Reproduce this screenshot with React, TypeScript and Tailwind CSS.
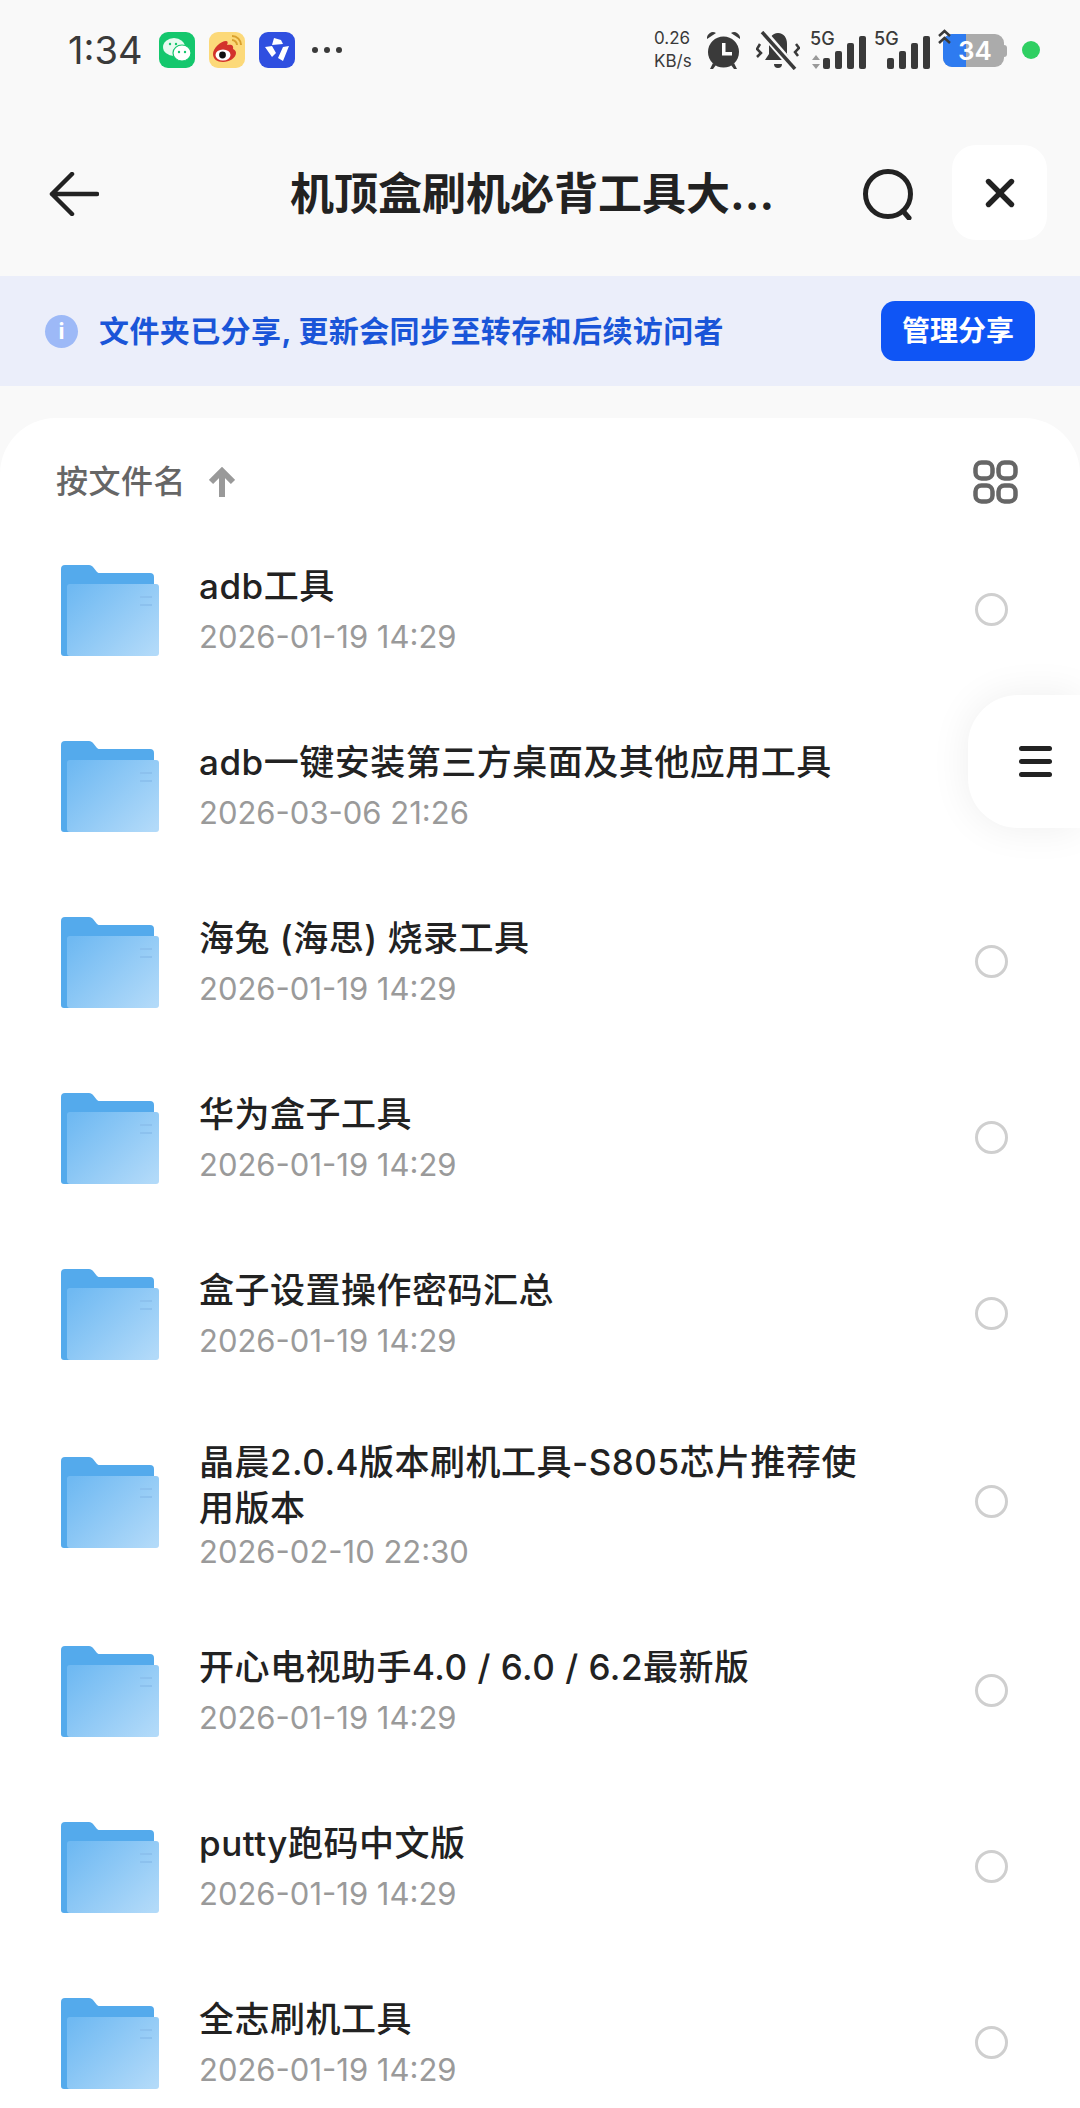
import { X } from "lucide-react";

const cjk = "font-['Inter','Noto_Sans_CJK_SC',sans-serif]";

const files = [
  { name: "adb工具", date: "2026-01-19 14:29" },
  { name: "adb一键安装第三方桌面及其他应用工具", date: "2026-03-06 21:26" },
  { name: "海兔 (海思) 烧录工具", date: "2026-01-19 14:29" },
  { name: "华为盒子工具", date: "2026-01-19 14:29" },
  { name: "盒子设置操作密码汇总", date: "2026-01-19 14:29" },
  { name: "晶晨2.0.4版本刷机工具-S805芯片推荐使用版本", date: "2026-02-10 22:30", tall: true },
  { name: "开心电视助手4.0 / 6.0 / 6.2最新版", date: "2026-01-19 14:29" },
  { name: "putty跑码中文版", date: "2026-01-19 14:29" },
  { name: "全志刷机工具", date: "2026-01-19 14:29" },
];

function FolderIcon() {
  return (
    <svg width="98" height="91" viewBox="0 0 98 91" className="shrink-0 -mt-[2px]">
      <defs>
        <linearGradient id="folderFront" x1="0" y1="0.1" x2="1" y2="0.9">
          <stop offset="0" stopColor="#6fb9f2" />
          <stop offset="1" stopColor="#b2daf9" />
        </linearGradient>
      </defs>
      <path d="M0 4a4 4 0 0 1 4-4h24c2 0 3 1 4 2l4 5c1 1 2 1 3 1h50a4 4 0 0 1 4 4v79H3a3 3 0 0 1-3-3z" fill="#54aaec" />
      <rect x="6" y="19" width="92" height="72" rx="3" fill="url(#folderFront)" />
      <rect x="79" y="31" width="12" height="2" fill="#8cc1ee" />
      <rect x="79" y="39" width="12" height="2" fill="#8cc1ee" />
    </svg>
  );
}

function Signal({ arrows }: { arrows?: boolean }) {
  return (
    <div className="relative w-[56px] h-[38px]">
      <span className="absolute left-0 -top-[1px] text-[18px] font-medium leading-[18px] font-['Inter',sans-serif]">5G</span>
      {arrows && (
        <svg width="10" height="14" viewBox="0 0 10 14" fill="#9a9a9a" className="absolute left-[1px] bottom-0">
          <path d="M5 0l4 5H1zM5 14l4-5H1z" />
        </svg>
      )}
      <div className="absolute right-0 bottom-0 flex items-end gap-[5px]">
        <span className="w-[7px] h-[11px] rounded-[2px] bg-[#3a3a3a]" />
        <span className="w-[7px] h-[18px] rounded-[2px] bg-[#3a3a3a]" />
        <span className="w-[7px] h-[26px] rounded-[2px] bg-[#3a3a3a]" />
        <span className="w-[7px] h-[33px] rounded-[2px] bg-[#3a3a3a]" />
      </div>
    </div>
  );
}

function StatusBar() {
  return (
    <div className="h-[100px] flex items-center pl-[68px] pr-[40px] text-[#3a3a3a]">
      <span className="text-[38px] w-[74px] font-['Inter',sans-serif] leading-none">1:34</span>
      <div className="ml-[17px] w-[36px] h-[36px] rounded-[9px] bg-[#14c76d] flex items-center justify-center">
        <svg width="30" height="26" viewBox="0 0 30 26">
          <ellipse cx="12" cy="10" rx="11" ry="9" fill="#e8faf0" />
          <ellipse cx="20" cy="16" rx="9" ry="8" fill="#fff" stroke="#14c76d" strokeWidth="1.2" />
          <circle cx="8" cy="7" r="1.2" fill="#14c76d" />
          <circle cx="14" cy="7" r="1.2" fill="#14c76d" />
          <circle cx="17" cy="15" r="1.2" fill="#14c76d" />
          <circle cx="23" cy="15" r="1.2" fill="#14c76d" />
        </svg>
      </div>
      <div className="ml-[14px] w-[36px] h-[36px] rounded-[9px] bg-[#fcd979] flex items-center justify-center">
        <svg width="34" height="32" viewBox="0 0 34 32">
          <path d="M3 20c0-6 8-13 13-13 2 0 2 2 1 4 4-1 7 0 6 4 2 1 3 2 3 4 0 5-7 9-13 9S3 25 3 20z" fill="#d3322b" />
          <ellipse cx="13" cy="21" rx="7.5" ry="5.5" fill="#fff" />
          <circle cx="12.5" cy="21" r="3.4" fill="#111" />
          <path d="M22 2c5 0 9 4 9 9M22 6c2.500 0 5 2.500 5 5" fill="none" stroke="#d9a02e" strokeWidth="2" />
        </svg>
      </div>
      <div className="ml-[14px] w-[36px] h-[36px] rounded-[9px] bg-[#2f4fe0] flex items-center justify-center">
        <svg width="28" height="28" viewBox="0 0 28 28">
          <path d="M11 2l7 2 2 4-11 1zM2 11l7-1 4 7-4 4zM26 10l-6 15-5-3 5-11z" fill="#fff" />
        </svg>
      </div>
      <div className="ml-[17px] flex gap-[6px]">
        <span className="w-[6px] h-[6px] rounded-full bg-[#3a3a3a]" />
        <span className="w-[6px] h-[6px] rounded-full bg-[#3a3a3a]" />
        <span className="w-[6px] h-[6px] rounded-full bg-[#3a3a3a]" />
      </div>
      <div className="ml-auto flex items-center">
        <div className="w-[41px] text-[17px] leading-[23px] font-['Inter',sans-serif] whitespace-nowrap">
          <div>0.26</div>
          <div>KB/s</div>
        </div>
        <svg className="ml-[12px]" width="33" height="38" viewBox="0 0 33 38" fill="#3a3a3a">
          <circle cx="16.500" cy="21" r="15.500" />
          <path d="M0 8a6 6 0 0 1 9-6zM33 8a6 6 0 0 0-9-6zM6 32l-3 6h3l3-4zM27 32l3 6h-3l-3-4z" />
          <path d="M15 12h3.500v9H25v3.500H15z" fill="#fff" />
        </svg>
        <svg className="ml-[16px]" width="44" height="39" viewBox="0 0 44 39" fill="#3a3a3a">
          <path d="M22 2c6 0 9 5 9 11v10l4 6H9l4-6V13c0-6 3-11 9-11zM18 33h8a4 4 0 0 1-8 0z" />
          <path d="M6 0l32 37" stroke="#f9f9f9" strokeWidth="8" />
          <path d="M6 1l33 37" stroke="#3a3a3a" strokeWidth="3.500" />
          <path d="M4 13L1 18l4 4-4 4M40 13l3 4-4 4 3 4" fill="none" stroke="#3a3a3a" strokeWidth="2.500" />
        </svg>
        <div className="ml-[10px]">
          <Signal arrows />
        </div>
        <div className="ml-[8px]">
          <Signal />
        </div>
        <div className="relative ml-[13px] w-[64px] h-[33px]">
          <div className="absolute left-0 top-0 h-full w-[61px] rounded-[9px] bg-[#ababab] overflow-hidden">
            <div className="h-full w-[23px] bg-[#2e7bf0]" />
          </div>
          <div className="absolute right-0 top-[11px] w-[3px] h-[12px] rounded-r bg-[#ababab]" />
          <span className="absolute left-[15px] top-[3px] text-[26px] leading-[28px] font-semibold text-white font-['Inter',sans-serif]">34</span>
          <svg width="13" height="17" viewBox="0 0 13 17" fill="none" stroke="#3a3a3a" strokeWidth="2.500" className="absolute -left-[5px] -top-[5px]">
            <path d="M1 7l5.500-5L12 7M1 14l5.500-5L12 14" />
          </svg>
        </div>
        <span className="ml-[15px] w-[18px] h-[18px] rounded-full bg-[#2fcf62]" />
      </div>
    </div>
  );
}

function FileRow({ name, date, tall }: { name: string; date: string; tall?: boolean }) {
  return (
    <div className={`flex items-center pl-[61px] pr-[72px] ${tall ? "h-[201px]" : "h-[176px]"}`}>
      <FolderIcon />
      <div className={`ml-[40px] w-[672px] ${tall ? "pt-[4px]" : "pb-[3px]"}`}>
        <div className="text-[35px] leading-[46px] tracking-[0.5px] font-medium text-[#222]">{name}</div>
        <div className={`text-[31px] leading-[40px] text-[#9a9a9a] ${tall ? "mt-[1px]" : "mt-[8px]"}`}>{date}</div>
      </div>
      <span className="ml-auto -mt-[4px] w-[33px] h-[33px] rounded-full border-[3px] border-[#cfcfcf]" />
    </div>
  );
}

export default function App() {
  return (
    <div className={`w-[1080px] h-[2108px] overflow-hidden bg-[#f9f9f9] ${cjk}`}>
      <StatusBar />
      <div className="h-[176px] flex items-center pl-[49px] pt-[12px]">
        <svg width="50" height="44" viewBox="0 0 50 44" fill="none" stroke="#222" strokeWidth="4.500" strokeLinecap="round" strokeLinejoin="round">
          <path d="M23 2L3 22l20 20M3 22h45" />
        </svg>
        <div className="ml-[191px] w-[490px] text-[44px] leading-[56px] font-bold text-[#222] whitespace-nowrap">机顶盒刷机必背工具大...</div>
        <svg width="53" height="51" viewBox="0 0 53 51" className="ml-[82px]" fill="none" stroke="#222" strokeWidth="5" strokeLinecap="round">
          <circle cx="26" cy="25" r="22.500" />
          <path d="M41 42l6 7" />
        </svg>
        <div className="ml-[37px] -mt-[3px] w-[95px] h-[95px] rounded-[24px] bg-white flex items-center justify-center">
          <X size={46} strokeWidth={2.8} color="#222" />
        </div>
      </div>
      <div className="h-[110px] bg-[#ebeefa] flex items-center pl-[45px] pr-[45px]">
        <span className="w-[33px] h-[33px] rounded-full bg-[#9db9f7] text-white text-[22px] leading-none font-bold flex items-center justify-center">i</span>
        <span className="ml-[21px] text-[30px] tracking-[0.4px] font-bold text-[#1a55d8] whitespace-nowrap">文件夹已分享, 更新会同步至转存和后续访问者</span>
        <button className="ml-auto w-[154px] h-[60px] rounded-[14px] bg-[#0f55f5] text-white text-[28px] font-bold">管理分享</button>
      </div>
      <div className="relative mt-[32px] bg-white rounded-t-[56px] h-[1690px]">
        <div className="h-[105px] flex items-center pt-[22px] pl-[56px] pr-[62px]">
          <span className="text-[32px] tracking-[0.5px] text-[#666] font-medium">按文件名</span>
          <svg width="26" height="30" viewBox="0 0 26 30" className="ml-[23px]" fill="none" stroke="#999" strokeWidth="6">
            <path d="M13 30V5M2 15L13 4l11 11" />
          </svg>
          <svg width="45" height="44" viewBox="0 0 45 44" className="ml-auto" fill="none" stroke="#666" strokeWidth="4.500">
            <rect x="2.500" y="2.500" width="17" height="16" rx="6" />
            <rect x="25.500" y="2.500" width="17" height="16" rx="6" />
            <rect x="2.500" y="25.500" width="17" height="16" rx="6" />
            <rect x="25.500" y="25.500" width="17" height="16" rx="6" />
          </svg>
        </div>
        {files.map((f) => (
          <FileRow key={f.name} name={f.name} date={f.date} tall={f.tall} />
        ))}
        <div className="absolute right-0 top-[277px] w-[112px] h-[133px] rounded-l-[50px] bg-white shadow-[0_0_40px_rgba(0,0,0,0.07)] flex flex-col justify-center gap-[8px] pl-[51px]">
          <span className="w-[33px] h-[5px] rounded-full bg-[#222]" />
          <span className="w-[33px] h-[5px] rounded-full bg-[#222]" />
          <span className="w-[33px] h-[5px] rounded-full bg-[#222]" />
        </div>
      </div>
    </div>
  );
}
